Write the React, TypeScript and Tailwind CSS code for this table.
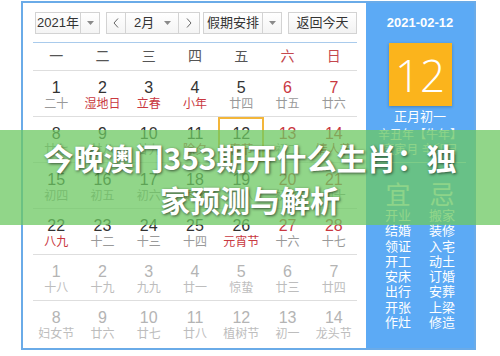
type Day = { d: number; l: string; lred?: boolean; other?: boolean; today?: boolean }

const weeks: Day[][] = [
  [
    { d: 1, l: '二十' },
    { d: 2, l: '湿地日', lred: true },
    { d: 3, l: '立春', lred: true },
    { d: 4, l: '小年', lred: true },
    { d: 5, l: '廿四' },
    { d: 6, l: '廿五' },
    { d: 7, l: '廿六' },
  ],
  [
    { d: 8, l: '廿七' },
    { d: 9, l: '廿八' },
    { d: 10, l: '廿九' },
    { d: 11, l: '除夕', lred: true },
    { d: 12, l: '春节', lred: true, today: true },
    { d: 13, l: '初二' },
    { d: 14, l: '情人节', lred: true },
  ],
  [
    { d: 15, l: '初四' },
    { d: 16, l: '初五' },
    { d: 17, l: '初六' },
    { d: 18, l: '雨水', lred: true },
    { d: 19, l: '初八' },
    { d: 20, l: '初九' },
    { d: 21, l: '初十' },
  ],
  [
    { d: 22, l: '八九', lred: true },
    { d: 23, l: '十二' },
    { d: 24, l: '十三' },
    { d: 25, l: '十四' },
    { d: 26, l: '元宵节', lred: true },
    { d: 27, l: '十六' },
    { d: 28, l: '十七' },
  ],
  [
    { d: 1, l: '十八', other: true },
    { d: 2, l: '十九', other: true },
    { d: 3, l: '九九', other: true },
    { d: 4, l: '廿一', other: true },
    { d: 5, l: '惊蛰', other: true },
    { d: 6, l: '廿三', other: true },
    { d: 7, l: '廿四', other: true },
  ],
  [
    { d: 8, l: '妇女节', other: true },
    { d: 9, l: '廿六', other: true },
    { d: 10, l: '廿七', other: true },
    { d: 11, l: '廿八', other: true },
    { d: 12, l: '植树节', other: true },
    { d: 13, l: '初一', other: true },
    { d: 14, l: '龙头节', other: true },
  ],
]

const yi = ['开业', '结婚', '领证', '开工', '安床', '出行', '开张', '作灶']
const ji = ['搬家', '装修', '入宅', '动土', '订婚', '安葬', '上梁', '修造']

function Caret() {
  return (
    <svg width="7" height="4" viewBox="0 0 7 4" className="shrink-0">
      <path d="M0 0h7L3.5 4z" fill="#8a8a8a" />
    </svg>
  )
}

function Chevron({ dir }: { dir: 'l' | 'r' }) {
  return (
    <svg width="6" height="10" viewBox="0 0 6 10">
      <path
        d={dir === 'l' ? 'M5 0.5 1 5l4 4.5' : 'M1 0.5 5 5 1 9.5'}
        fill="none"
        stroke="#666"
        strokeWidth="1"
      />
    </svg>
  )
}

function DayCell({ day, col }: { day: Day; col: number }) {
  const weekend = col >= 5
  const numColor = day.other ? 'text-[#b4b4b4]' : weekend ? 'text-[#c9383f]' : 'text-[#333]'
  const lunarColor = day.other ? 'text-[#bdbdbd]' : day.lred ? 'text-[#c9383f]' : 'text-[#999]'
  return (
    <div
      className={`flex flex-col items-center ${
        day.today ? 'border-2 border-[#f3b63a] pt-[5px]' : 'pt-[7px]'
      }`}
    >
      <span className={`text-[16px] leading-[20px] ${numColor}`}>{day.d}</span>
      <span className={`mt-[-1px] text-[12px] leading-[14px] ${lunarColor}`}>{day.l}</span>
    </div>
  )
}

function ListCol({ head, items }: { head: string; items: string[] }) {
  return (
    <div className="flex flex-col items-center">
      <div className="mt-[18px] text-[25px] leading-[28px] text-white/90">{head}</div>
      <div className="mt-[-1px] flex flex-col items-center text-[13px] leading-[15.3px]">
        {items.map((t) => (
          <span key={t}>{t}</span>
        ))}
      </div>
    </div>
  )
}

export default function App() {
  return (
    <div className="relative w-[500px] h-[356px] bg-white overflow-hidden font-['Liberation_Sans','Noto_Sans_CJK_SC',sans-serif]">
      <div className="ml-[21px] mt-[1px] w-[455px] h-[349px] border-2 border-[#6aabe8] flex">
        {/* left: calendar */}
        <div className="w-[343px] pl-[10px] pr-[9px] pt-[9px] flex flex-col">
          <div className="flex items-center h-[22px] text-[13px] text-[#333] whitespace-nowrap">
            <div className="ml-[2px] w-[65px] h-full flex border border-[#d3d3d3] bg-gradient-to-b from-white to-[#f4f4f4]">
              <div className="w-[45px] flex items-center justify-center border-r border-[#d3d3d3]">2021年</div>
              <div className="flex-1 flex items-center justify-center">
                <Caret />
              </div>
            </div>
            <div className="ml-[6px] w-[94px] h-full flex border border-[#d3d3d3] bg-gradient-to-b from-white to-[#f4f4f4]">
              <div className="w-[19px] flex items-center justify-center border-r border-[#d3d3d3]">
                <Chevron dir="l" />
              </div>
              <div className="w-[53px] flex items-center justify-between pl-[8px] pr-[7px] border-r border-[#d3d3d3]">
                <span>2月</span>
                <Caret />
              </div>
              <div className="flex-1 flex items-center justify-center">
                <Chevron dir="r" />
              </div>
            </div>
            <div className="ml-[3px] w-[79px] h-full flex border border-[#d3d3d3] bg-gradient-to-b from-white to-[#f4f4f4]">
              <div className="w-[59px] flex items-center justify-center border-r border-[#d3d3d3]">假期安排</div>
              <div className="flex-1 flex items-center justify-center">
                <Caret />
              </div>
            </div>
            <div className="ml-[6px] w-[69px] h-full flex items-center justify-center border border-[#d3d3d3] bg-gradient-to-b from-white to-[#f2f2f2]">
              返回今天
            </div>
          </div>

          <div className="mt-[8px] h-px bg-[#a9cbec]" />

          <div className="grid grid-cols-7 h-[28px] items-center text-[14px] border-b border-[#dedede]">
            {['一', '二', '三', '四', '五', '六', '日'].map((w, i) => (
              <div key={w} className={`text-center ${i >= 5 ? 'text-[#c4474d]' : 'text-[#555]'}`}>
                {w}
              </div>
            ))}
          </div>

          {weeks.map((week, r) => (
            <div
              key={r}
              className={`grid grid-cols-7 h-[46px] ${r < weeks.length - 1 ? 'border-b border-[#dedede]' : ''}`}
            >
              {week.map((day, c) => (
                <DayCell key={c} day={day} col={c} />
              ))}
            </div>
          ))}
        </div>

        {/* right: detail panel */}
        <div className="flex-1 bg-[#5caaf5] flex flex-col items-center text-white">
          <div className="mt-[12px] text-[13px] font-bold leading-[16px]">2021-02-12</div>
          <div className="mt-[12px] w-[63px] h-[63px] bg-[#fbb41c] shadow-[0_1px_3px_rgba(0,0,0,0.25)] flex items-center justify-center">
            <span className="font-['Open_Sans',sans-serif] font-light text-[44px] leading-none">12</span>
          </div>
          <div className="mt-[3px] text-[13px] leading-[16px]">正月初一</div>
          <div className="mt-[3px] text-[12px] leading-[15px] text-white/90">辛丑年【牛年】</div>
          <div className="text-[12px] leading-[15px] text-white/90">庚寅月 辛卯日</div>
          <div className="mt-[4px] w-[92px] h-px bg-white/50" />
          <div className="w-full grid grid-cols-2 px-[10px]">
            <ListCol head="宜" items={yi} />
            <ListCol head="忌" items={ji} />
          </div>
        </div>
      </div>

      {/* title banner over the calendar */}
      <div className="absolute left-0 top-[130px] w-full h-[95px] bg-[rgba(108,200,98,0.75)] flex items-center justify-center">
        <h1 className="max-w-[424px] text-center text-white font-bold text-[30px] leading-[42px] font-['Noto_Sans_CJK_SC',sans-serif] [text-shadow:1px_1px_3px_rgba(0,0,0,0.6)]">
          今晚澳门353期开什么生肖：独家预测与解析
        </h1>
      </div>
    </div>
  )
}
